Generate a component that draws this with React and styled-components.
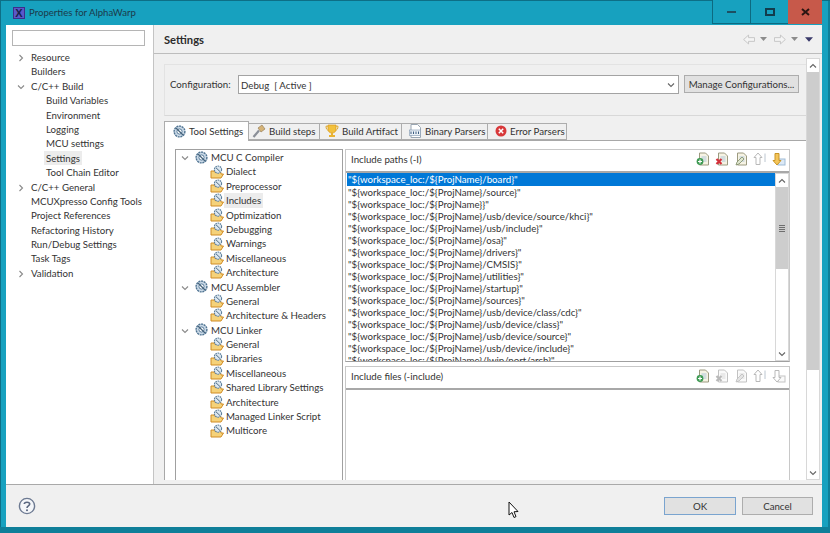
import React from 'react';
import styled, { createGlobalStyle } from 'styled-components';

const Global = createGlobalStyle`
  html, body { margin: 0; padding: 0; background: #17a1bf; overflow: hidden; }
  * { box-sizing: border-box; }
`;

const Window = styled.div`
  position: relative;
  width: 830px; height: 533px;
  display: flex; flex-direction: column;
  padding: 0 8px 0 6px;
  background: #17a1bf;
  border-bottom: 6px solid #0f7f99;
  box-shadow: inset 1px 1px 0 #0d6f86, inset -2px 0 0 #0f7f99;
  font-family: "Lato", "Noto Sans", sans-serif;
  font-size: 9.7px;
  color: #333;
`;
const TitleBar = styled.div`
  height: 25px; display: flex; align-items: center; flex: none;
`;
const AppIcon = styled.div`
  width: 12px; height: 12px; margin: 0 4px 0 7px;
  background: #5b58c8; color: #14204a; border: 1px solid #3d2e8c;
  display: flex; align-items: center; justify-content: center;
  font: bold 11px "Liberation Sans", sans-serif;
`;
const Title = styled.div`
  flex: 1; font-size: 9.6px; color: #1c3a4a;
`;
const WinButton = styled.div`
  width: ${p => p.$w}px; height: 24px; align-self: flex-start;
  background: ${p => p.$bg};
  border-left: 1px solid ${p => p.$line};
  border-bottom: 1px solid ${p => p.$line};
  display: flex; align-items: center; justify-content: center;
`;
const Body = styled.div`
  flex: 1; display: flex; flex-direction: column; background: #f0f0f0; min-height: 0;
`;
const Split = styled.div`
  flex: 1; display: flex; min-height: 0;
`;
const Sidebar = styled.div`
  width: 148px; flex: none; background: #fff; border-right: 1px solid #c4c4c4;
  padding: 5px 0 0 6px;
`;
const Search = styled.div`
  width: 133px; height: 16px; border: 1px solid #b5b5b5; background: #fff; margin-bottom: 4px;
`;
const NavRow = styled.div`
  height: 14.4px; display: flex; align-items: center;
  padding-left: ${p => p.$level * 15 + 19}px;
  position: relative; white-space: nowrap;
`;
const Caret = styled.svg`
  position: absolute; left: 5px; top: 4px; width: 8px; height: 8px;
  fill: none; stroke: #8a8a8a; stroke-width: 1.1;
`;
const NavLabel = styled.span`
  padding: 0 ${p => (p.$sel ? 2 : 0)}px; margin-left: ${p => (p.$sel ? -2 : 0)}px;
  background: ${p => (p.$sel ? '#ececec' : 'transparent')};
  line-height: 14.4px;
`;
const Main = styled.div`
  flex: 1; display: flex; flex-direction: column; min-width: 0;
`;
const PageHead = styled.div`
  height: 29px; flex: none; border-bottom: 1px solid #bdbdbd;
  display: flex; align-items: center; padding: 0 9px 0 10px;
`;
const PageTitle = styled.div`
  flex: 1; font-weight: 700; font-size: 11.2px; color: #2b2b2b;
`;
const Nav = styled.div`
  display: flex; align-items: center;
`;
const NavGap = styled.span`
  width: ${p => p.$w}px; flex: none;
`;
const Content = styled.div`
  flex: 1; display: flex; padding: 4px 2px 4px 10px; min-height: 0;
`;
const Column = styled.div`
  flex: 1; display: flex; flex-direction: column; padding-top: 6px; min-width: 0;
`;
const ConfigGroup = styled.div`
  height: 52px; flex: none; border: 1px solid #e3e3e3; border-right: 0; border-bottom-color: #d8d8d8;
  display: flex; align-items: flex-start; padding: 10px 7px 0 5px;
  margin-bottom: 5px;
`;
const ConfigLabel = styled.div`
  width: 68px; line-height: 18px; flex: none;
`;
const Combo = styled.div`
  width: 441px; height: 19px; background: #fff; border: 1px solid #a3a3a3; flex: none;
  display: flex; align-items: center; justify-content: space-between; padding: 0 3px 0 2px;
  white-space: pre;
`;
const GrayButton = styled.div`
  background: #e1e1e1; border: 1px solid #adadad;
  display: flex; align-items: center; justify-content: center; white-space: nowrap;
`;
const ManageButton = styled(GrayButton)`
  width: 115px; height: 18px; margin-left: 5px; flex: none;
`;
const TabStrip = styled.div`
  height: 19px; flex: none; display: flex; align-items: flex-end; position: relative; z-index: 1;
`;
const Tab = styled.div`
  width: ${p => p.$w}px; height: ${p => (p.$on ? 20 : 17)}px;
  background: ${p => (p.$on ? '#fff' : '#f0f0f0')};
  border: 1px solid #adadad; border-bottom: ${p => (p.$on ? 0 : '1px solid #adadad')};
  border-left: ${p => (p.$on ? '1px solid #adadad' : 0)};
  margin-bottom: ${p => (p.$on ? -1 : 0)}px;
  display: flex; align-items: center; gap: 3px; padding-left: ${p => p.$pad}px; padding-bottom: 1px;
  white-space: nowrap;
`;
const TabPanel = styled.div`
  flex: 1; background: #fff; border-left: 1px solid #a8a8a8; border-top: 1px solid #a8a8a8;
  display: flex; padding: 8px 16px 0 10px; gap: 2px; min-height: 0;
`;
const TreeBox = styled.div`
  width: 168px; flex: none; border: 1px solid #a0a0a0; border-bottom: 0;
`;
const TreeRow = styled.div`
  height: 14.4px; display: flex; align-items: center; position: relative; white-space: nowrap;
  padding-left: ${p => (p.$child ? 34 : 19)}px; gap: ${p => (p.$child ? 2 : 3)}px;
`;
const Sections = styled.div`
  flex: 1; display: flex; flex-direction: column; gap: 4px; min-width: 0;
`;
const Section = styled.div`
  flex: ${p => (p.$grow ? '1' : '0 0 213px')}; display: flex; flex-direction: column; min-height: 0;
  border: 1px solid #c8c8c8; border-bottom: ${p => (p.$grow ? '0' : '1px solid #a0a0a0')};
`;
const SectionHead = styled.div`
  height: 23px; flex: none; background: #fff; border-bottom: 2px solid #a8a8a8;
  display: flex; align-items: center; padding: 0 3px 4px 5px;
`;
const SectionTitle = styled.div`
  flex: 1;
`;
const Tools = styled.div`
  display: flex; align-items: center; gap: 5px;
`;
const ListWrap = styled.div`
  flex: 1; display: flex; min-height: 0; padding-left: 1px;
`;
const List = styled.div`
  flex: 1; overflow: hidden; min-width: 0;
`;
const ListRow = styled.div`
  height: ${p => (p.$sel ? 13 : 12)}px; line-height: 12px; padding-left: 1px; white-space: nowrap;
  background: ${p => (p.$sel ? '#0078d7' : 'transparent')};
  color: ${p => (p.$sel ? '#fff' : '#333')};
`;
const ScrollBar = styled.div`
  width: ${p => p.$w}px; flex: none; display: flex; flex-direction: column;
  background: #fff; border: 1px solid #d8d8d8;
`;
const ScrollBtn = styled.div`
  height: 13px; flex: none; display: flex; align-items: center; justify-content: center; background: #fff;
`;
const Thumb = styled.div`
  height: ${p => p.$h}px; flex: none; background: #cdcdcd;
  display: flex; align-items: center; justify-content: center;
`;
const Grip = styled.div`
  width: 6px; height: 7px;
  background: repeating-linear-gradient(#6e6e6e 0 1px, #cdcdcd 1px 2px);
`;
const Track = styled.div`
  flex: 1;
`;
const Footer = styled.div`
  height: 43px; flex: none; border-top: 1px solid #a9a9a9; background: #f0f0f0;
  display: flex; align-items: flex-start; padding: 12px 9px 0 12px;
`;
const HelpSlot = styled.div`
  flex: 1;
`;
const DialogButton = styled(GrayButton)`
  width: ${p => p.$w}px; height: 18px; margin-left: 6px;
  border-color: ${p => (p.$primary ? '#7aa4cf' : '#adadad')};
`;
const Pointer = styled.svg`
  position: absolute; left: 508px; top: 501px; width: 12px; height: 18px;
`;

const ChevR = () => <Caret viewBox="0 0 8 8"><path d="M2.5 1 L5.5 4 L2.5 7" /></Caret>;
const ChevD = () => <Caret viewBox="0 0 8 8"><path d="M1 2.5 L4 5.5 L7 2.5" /></Caret>;

const Arrow = ({ up }) => (
  <svg width="8" height="6" viewBox="0 0 8 6" fill="none" stroke="#666" strokeWidth="1.1">
    <path d={up ? 'M1 4.5 L4 1.5 L7 4.5' : 'M1 1.5 L4 4.5 L7 1.5'} />
  </svg>
);

const ToolGear = () => (
  <svg width="13" height="13" viewBox="0 0 13 13" style={{ flex: 'none' }}>
    <circle cx="6.5" cy="6.5" r="5.4" fill="#c9d8e6" stroke="#4f7391" strokeWidth="1.4" strokeDasharray="2 .7" />
    <circle cx="6.5" cy="6.5" r="2.6" fill="#fff" stroke="#5c7f9c" />
    <path d="M3 3 L10 10" stroke="#46637c" strokeWidth="1.3" />
  </svg>
);

const FolderGear = () => (
  <svg width="14" height="14" viewBox="0 0 14 14" style={{ flex: 'none' }}>
    <path d="M1 13 L1 6 L4 6 L5 7.5 L11 7.5 L11 9 L13.5 9 L11 13 Z" fill="#f5d27a" stroke="#d08c25" strokeWidth="1" />
    <circle cx="8" cy="4.6" r="3.6" fill="#dce7f0" stroke="#5c7f9c" strokeWidth="1.1" strokeDasharray="1.6 .7" />
    <path d="M5.8 2.6 L10 6.6" stroke="#4d6c86" strokeWidth="1" />
  </svg>
);

const Hammer = () => (
  <svg width="14" height="14" viewBox="0 0 14 14" style={{ flex: 'none' }}>
    <path d="M1.5 13 L7 6.5" stroke="#8a8f98" strokeWidth="2.2" />
    <path d="M6 4 L10 1 L13 5 L9 8 Z" fill="#d5b377" stroke="#98805a" strokeWidth=".7" />
  </svg>
);
const Trophy = () => (
  <svg width="14" height="15" viewBox="0 0 14 15" style={{ flex: 'none' }}>
    <path d="M3 1 H11 V5 C11 8 9 9 7 9 C5 9 3 8 3 5 Z" fill="#f2c13c" stroke="#d89a1c" strokeWidth=".7" />
    <path d="M3 2.2 H1 C1 5 2 6 3.6 6.4 M11 2.2 H13 C13 5 12 6 10.4 6.4" fill="none" stroke="#e0a92a" />
    <path d="M6 9 H8 V11 H10 V13 H4 V11 H6 Z" fill="#e8b334" />
  </svg>
);
const Binary = () => (
  <svg width="13" height="14" viewBox="0 0 13 14" style={{ flex: 'none' }}>
    <path d="M2 .5 H8.5 L11.5 3.5 V13.5 H2 Z" fill="#fff" stroke="#9aa6b2" />
    <rect x=".5" y="6" width="11" height="5.5" fill="#eaf0f6" stroke="#7d95ae" strokeWidth=".6" />
    <path d="M2 7.5 V10 M4.5 7.5 V10 M7 7.5 V10 M9.5 7.5 V10" stroke="#3c5d80" strokeWidth="1" />
  </svg>
);
const ErrorIcon = () => (
  <svg width="12" height="12" viewBox="0 0 12 12" style={{ flex: 'none' }}>
    <circle cx="6" cy="6" r="5.5" fill="#d8383a" />
    <path d="M3.8 3.8 L8.2 8.2 M8.2 3.8 L3.8 8.2" stroke="#fff" strokeWidth="1.5" />
  </svg>
);

const DocIcon = ({ kind, off }) => {
  const stroke = off ? '#c2c2c2' : '#9c9a80';
  const mark = off ? '#b9b9b9' : null;
  const isDoc = kind !== 'up' && kind !== 'down';
  return (
    <svg width="14" height="14" viewBox="0 0 14 14">
      {isDoc && <path d="M3.5 1 H9.5 L12.5 4 V13 H3.5 Z" fill={off ? '#fafafa' : '#f6f3e4'} stroke={stroke} />}
      {isDoc && <path d="M5.5 5 H10.5 M5.5 7 H10.5 M7 9 H10.5" stroke={off ? '#d0d0d0' : '#9fbbd6'} strokeWidth=".8" />}
      {kind === 'add' && <g><circle cx="4" cy="9.5" r="3.4" fill="#3d9a52" /><path d="M2 9.5 H6 M4 7.5 V11.5" stroke="#fff" strokeWidth="1.2" /></g>}
      {kind === 'del' && <path d="M1.5 7 L6.5 12 M6.5 7 L1.5 12" stroke={mark || '#d3303a'} strokeWidth="2.2" />}
      {kind === 'edit' && <path d="M2 13 L3 10 L8 5 L10 7 L5 12 Z" fill={off ? '#e4e4e4' : '#dfe6cf'} stroke={off ? '#bdbdbd' : '#7e8a66'} strokeWidth=".8" />}
      {kind === 'up' && (
        <g>
          <path d="M5 1 L9 5.5 H7 V12.5 H3 V5.5 H1 Z" fill="#fff" stroke="#b9b9b9" />
          <path d="M12 1.5 V10" stroke="#bcc6d0" />
        </g>
      )}
      {kind === 'down' && (
        <g>
          <rect x="6" y="7" width="7" height="6" fill={off ? '#fafafa' : '#dce9f6'} stroke={off ? '#c4c4c4' : '#9fbbd6'} />
          <path d="M5 13 L1 8.5 H3 V1.5 H7 V8.5 H9 Z" fill={off ? '#fff' : '#f4c55a'} stroke={off ? '#b9b9b9' : '#c99526'} />
        </g>
      )}
    </svg>
  );
};

const NavArrow = ({ right }) => (
  <svg width="12" height="11" viewBox="0 0 13 11" fill="#f4f4f4" stroke="#c3c3c3">
    <path d={right ? 'M.5 3.5 H7 V.7 L12.3 5.5 L7 10.3 V7.5 H.5 Z' : 'M12.5 3.5 H6 V.7 L.7 5.5 L6 10.3 V7.5 H12.5 Z'} />
  </svg>
);
const Tri = ({ color, w = 7, h = 4 }) => (
  <svg width={w} height={h} viewBox="0 0 7 4" fill={color}><path d="M0 0 H7 L3.5 4 Z" /></svg>
);

const nav = [
  [0, 'Resource', 'r'], [0, 'Builders'], [0, 'C/C++ Build', 'd'],
  [1, 'Build Variables'], [1, 'Environment'], [1, 'Logging'], [1, 'MCU settings'],
  [1, 'Settings', null, true], [1, 'Tool Chain Editor'],
  [0, 'C/C++ General', 'r'], [0, 'MCUXpresso Config Tools'], [0, 'Project References'],
  [0, 'Refactoring History'], [0, 'Run/Debug Settings'], [0, 'Task Tags'], [0, 'Validation', 'r'],
];

const tree = [
  ['MCU C Compiler', ['Dialect', 'Preprocessor', 'Includes', 'Optimization', 'Debugging', 'Warnings', 'Miscellaneous', 'Architecture']],
  ['MCU Assembler', ['General', 'Architecture & Headers']],
  ['MCU Linker', ['General', 'Libraries', 'Miscellaneous', 'Shared Library Settings', 'Architecture', 'Managed Linker Script', 'Multicore']],
];

const P = '"${workspace_loc:/${ProjName}';
const paths = [
  '/board}"', '/source}"', '}"', '/usb/device/source/khci}"', '/usb/include}"', '/osa}"', '/drivers}"',
  '/CMSIS}"', '/utilities}"', '/startup}"', '/sources}"', '/usb/device/class/cdc}"', '/usb/device/class}"',
  '/usb/device/source}"', '/usb/device/include}"', '/lwip/port/arch}"',
].map(s => P + s);

const tools = ['add', 'del', 'edit', 'up', 'down'];

export default function App() {
  return (
    <Window>
      <Global />
      <TitleBar>
        <AppIcon>X</AppIcon>
        <Title>Properties for AlphaWarp</Title>
        <WinButton $w={38} $bg="#17a1bf" $line="#0d6a80">
          <svg width="9" height="3"><rect width="9" height="2" y="1" fill="#1d4f62" /></svg>
        </WinButton>
        <WinButton $w={38} $bg="#17a1bf" $line="#0d6a80">
          <svg width="10" height="8" fill="none" stroke="#123c4c" strokeWidth="2"><rect x="1" y="1" width="8" height="6" /></svg>
        </WinButton>
        <WinButton $w={34} $bg="#c7594a" $line="#c7594a">
          <svg width="9" height="8" stroke="#2a1512" strokeWidth="2"><path d="M1 1 L8 7 M8 1 L1 7" /></svg>
        </WinButton>
      </TitleBar>
      <Body>
        <Split>
          <Sidebar>
            <Search />
            {nav.map(([level, label, caret, sel]) => (
              <NavRow key={label} $level={level}>
                {caret === 'r' && <ChevR />}
                {caret === 'd' && <ChevD />}
                <NavLabel $sel={sel}>{label}</NavLabel>
              </NavRow>
            ))}
          </Sidebar>
          <Main>
            <PageHead>
              <PageTitle>Settings</PageTitle>
              <Nav>
                <NavArrow />
                <NavGap $w={5} />
                <Tri color="#8c8c8c" />
                <NavGap $w={7} />
                <NavArrow right />
                <NavGap $w={5} />
                <Tri color="#8c8c8c" />
                <NavGap $w={7} />
                <Tri color="#3a3a6a" w={8} h={5} />
              </Nav>
            </PageHead>
            <Content>
              <Column>
                <ConfigGroup>
                  <ConfigLabel>Configuration:</ConfigLabel>
                  <Combo>
                    <span>Debug  [ Active ]</span>
                    <Arrow />
                  </Combo>
                  <ManageButton>Manage Configurations...</ManageButton>
                </ConfigGroup>
                <TabStrip>
                  <Tab $w={85} $pad={8} $on><ToolGear />Tool Settings</Tab>
                  <Tab $w={71} $pad={3}><Hammer />Build steps</Tab>
                  <Tab $w={82} $pad={5}><Trophy />Build Artifact</Tab>
                  <Tab $w={86} $pad={7}><Binary />Binary Parsers</Tab>
                  <Tab $w={79} $pad={7}><ErrorIcon />Error Parsers</Tab>
                </TabStrip>
                <TabPanel>
                  <TreeBox>
                    {tree.map(([name, kids]) => (
                      <React.Fragment key={name}>
                        <TreeRow>
                          <ChevD />
                          <ToolGear />
                          {name}
                        </TreeRow>
                        {kids.map(k => (
                          <TreeRow key={name + k} $child>
                            <FolderGear />
                            <NavLabel $sel={k === 'Includes'}>{k}</NavLabel>
                          </TreeRow>
                        ))}
                      </React.Fragment>
                    ))}
                  </TreeBox>
                  <Sections>
                    <Section>
                      <SectionHead>
                        <SectionTitle>Include paths (-I)</SectionTitle>
                        <Tools>{tools.map(t => <DocIcon key={t} kind={t} />)}</Tools>
                      </SectionHead>
                      <ListWrap>
                        <List>
                          {paths.map((p, i) => <ListRow key={p} $sel={i === 0}>{p}</ListRow>)}
                        </List>
                        <ScrollBar $w={14}>
                          <ScrollBtn><Arrow up /></ScrollBtn>
                          <Thumb $h={82}><Grip /></Thumb>
                          <Track />
                          <ScrollBtn><Arrow /></ScrollBtn>
                        </ScrollBar>
                      </ListWrap>
                    </Section>
                    <Section $grow>
                      <SectionHead>
                        <SectionTitle>Include files (-include)</SectionTitle>
                        <Tools>{tools.map((t, i) => <DocIcon key={t} kind={t} off={i > 0} />)}</Tools>
                      </SectionHead>
                    </Section>
                  </Sections>
                </TabPanel>
              </Column>
              <ScrollBar $w={14}>
                <ScrollBtn><Arrow up /></ScrollBtn>
                <Thumb $h={298} />
                <Track />
                <ScrollBtn><Arrow /></ScrollBtn>
              </ScrollBar>
            </Content>
          </Main>
        </Split>
        <Footer>
          <HelpSlot>
            <svg width="18" height="18" viewBox="0 0 18 18" fill="none">
              <circle cx="9" cy="9" r="7.6" stroke="#6d7a92" strokeWidth="1.4" fill="#f4f6f9" />
              <path d="M6.3 7 C6.3 4.6 11.7 4.6 11.7 7 C11.7 9 9 8.8 9 11" stroke="#5a6780" strokeWidth="1.6" />
              <circle cx="9" cy="13.2" r="1" fill="#5a6780" />
            </svg>
          </HelpSlot>
          <DialogButton $w={72} $primary>OK</DialogButton>
          <DialogButton $w={71}>Cancel</DialogButton>
        </Footer>
      </Body>
      <Pointer viewBox="0 0 12 18">
        <path d="M1 1 L1 14 L4 11.5 L6 16.5 L8 15.6 L6 10.8 L10 10.5 Z" fill="#fff" stroke="#111" strokeWidth="1" />
      </Pointer>
    </Window>
  );
}
